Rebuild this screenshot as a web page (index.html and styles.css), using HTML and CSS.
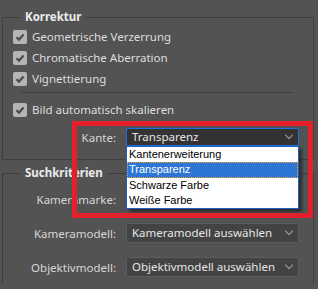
FILE: index.html
```html
<!DOCTYPE html>
<html lang="de">
<head>
    <meta charset="UTF-8">
    <title>Objektivkorrektur</title>
    <link rel="stylesheet" href="styles.css">
</head>
<body>
    <fieldset class="group group-first">
        <legend>Korrektur</legend>
        <div class="check-row"><span class="box"><svg viewBox="0 0 14 14"><path d="M3.5 7.2 L6 9.6 L10.6 4.6" /></svg></span>Geometrische Verzerrung</div>
        <div class="check-row"><span class="box"><svg viewBox="0 0 14 14"><path d="M3.5 7.2 L6 9.6 L10.6 4.6" /></svg></span>Chromatische Aberration</div>
        <div class="check-row"><span class="box"><svg viewBox="0 0 14 14"><path d="M3.5 7.2 L6 9.6 L10.6 4.6" /></svg></span>Vignettierung</div>
        <div class="divider"></div>
        <div class="check-row"><span class="box"><svg viewBox="0 0 14 14"><path d="M3.5 7.2 L6 9.6 L10.6 4.6" /></svg></span>Bild automatisch skalieren</div>
        <div class="field-row field-kante">
            <label>Kante:</label>
            <div class="select select-focus">Transparenz<span class="chev"></span></div>
        </div>
    </fieldset>

    <fieldset class="group group-second">
        <legend>Suchkriterien</legend>
        <div class="field-row">
            <label>Kameramarke:</label>
            <div class="select">Kameramarke auswählen<span class="chev"></span></div>
        </div>
        <div class="field-row">
            <label>Kameramodell:</label>
            <div class="select">Kameramodell auswählen<span class="chev"></span></div>
        </div>
        <div class="field-row">
            <label>Objektivmodell:</label>
            <div class="select">Objektivmodell auswählen<span class="chev"></span></div>
        </div>
    </fieldset>

    <ul class="dropdown">
        <li>Kantenerweiterung</li>
        <li class="active">Transparenz</li>
        <li>Schwarze Farbe</li>
        <li>Weiße Farbe</li>
    </ul>

    <div class="highlight"></div>
</body>
</html>
```

FILE: styles.css
```css
html, body {
    margin: 0;
    padding: 0;
    background-color: #535353;
    font-family: "Noto Sans", "Open Sans", Arial, sans-serif;
    font-size: 11.5px;
    color: #dedede;
    height: 289px;
    overflow: hidden;
}

.group {
    margin: 0 4px 0 2px;
    padding: 0 0 0 10px;
    border: 1px solid #3f3f3f;
    min-width: 0;
}

.group legend {
    margin-left: 8px;
    padding: 0 4px;
    font-weight: bold;
    color: #ececec;
    line-height: 14px;
}

.group-first {
    margin-top: 10px;
    height: 146px;
    padding-top: 2px;
}

.group-second {
    margin-top: 6px;
    height: 107px;
    padding-top: 9px;
    border-bottom: none;
}

.check-row {
    display: flex;
    align-items: center;
    gap: 5px;
    height: 21px;
}

.box {
    width: 14px;
    height: 14px;
    border-radius: 2px;
    background-color: #b5b5b5;
    display: flex;
}

.box svg {
    width: 14px;
    height: 14px;
}

.box path {
    fill: none;
    stroke: #4a4a4a;
    stroke-width: 2.2;
}

.divider {
    margin: 3px 0 6px 8px;
    width: 272px;
    height: 0;
    border-top: 1px solid #3f3f3f;
}

.field-row {
    display: grid;
    grid-template-columns: 103px 173px;
    column-gap: 10px;
    align-items: center;
    height: 20px;
    margin-bottom: 14px;
}

.field-row label {
    text-align: right;
    color: #d6d6d6;
}

.field-kante {
    margin-top: 7px;
}

.select {
    position: relative;
    box-sizing: border-box;
    height: 20px;
    line-height: 18px;
    padding-left: 5px;
    background-color: #434343;
    border: 1px solid #5c5c5c;
    border-radius: 2px;
    color: #e6e6e6;
    white-space: nowrap;
    overflow: hidden;
}

.select-focus {
    height: 18px;
    line-height: 16px;
    background-color: #333333;
    border-color: #1e6fd9;
}

.chev {
    position: absolute;
    right: 6px;
    top: 50%;
    width: 5px;
    height: 5px;
    margin-top: -5px;
    border-right: 1.5px solid #a0a0a0;
    border-bottom: 1.5px solid #a0a0a0;
    transform: rotate(45deg);
}

.dropdown {
    position: absolute;
    left: 126px;
    top: 146px;
    width: 173px;
    box-sizing: border-box;
    margin: 0;
    padding: 0;
    list-style: none;
    background-color: #ffffff;
    border: 1px solid #1c62c4;
    box-shadow: 3px 3px 3px rgba(0, 0, 0, 0.45);
    color: #000000;
    font-family: "Liberation Sans", Arial, sans-serif;
    font-size: 11px;
}

.dropdown li {
    height: 15.25px;
    line-height: 15px;
    padding-left: 2px;
    box-sizing: border-box;
}

.dropdown li.active {
    background-color: #2d76d6;
    color: #ffffff;
    outline: 1px dotted #f0a030;
    outline-offset: -1px;
}

.highlight {
    position: absolute;
    left: 72px;
    top: 121px;
    width: 241px;
    height: 97px;
    box-sizing: border-box;
    border: 5px solid #e4202a;
}
```
